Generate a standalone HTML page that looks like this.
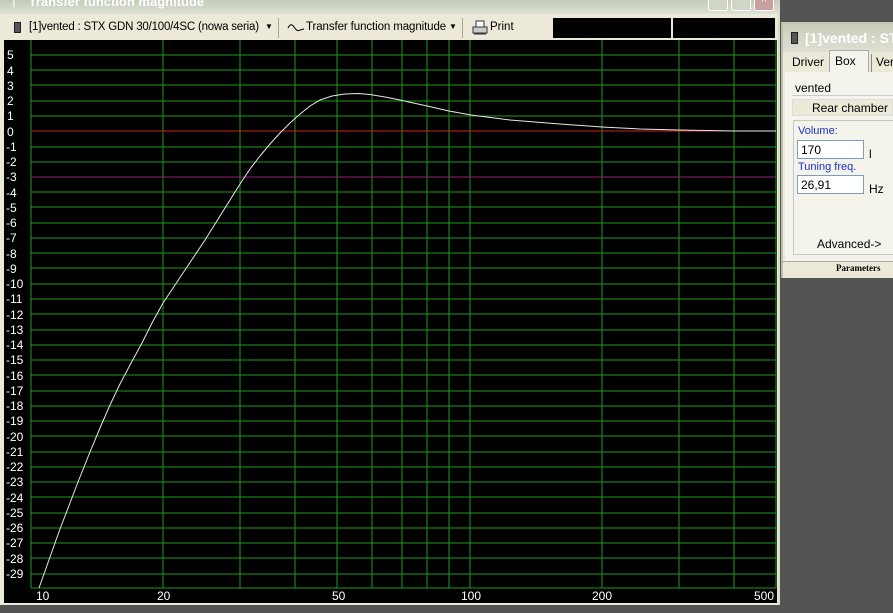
<!DOCTYPE html>
<html><head><meta charset="utf-8"><style>
*{margin:0;padding:0;box-sizing:border-box}
body{width:893px;height:613px;overflow:hidden;background:#545454;font-family:"Liberation Sans",sans-serif;position:relative}
.abs{position:absolute;white-space:nowrap}
</style></head><body>
<div class="abs" style="left:0;top:0;width:780px;height:605px;background:#ece9d8;border-right:2px solid #d8dcc8"></div>
<div class="abs" style="left:0;top:0;width:780px;height:14px;background:linear-gradient(#c4c9b8,#dfe2d6);overflow:hidden">
 <div class="abs" style="left:10px;top:-6px;color:#fff;font-size:13px;font-weight:bold;">ᛘ&nbsp;&nbsp; Transfer function magnitude</div>
</div>
<div class="abs" style="left:708px;top:-4px;width:20px;height:15px;background:#d0d6c6;border:1px solid #fff;border-radius:3px"></div>
<div class="abs" style="left:731px;top:-4px;width:20px;height:15px;background:#d0d6c6;border:1px solid #fff;border-radius:3px"></div>
<div class="abs" style="left:754px;top:-4px;width:20px;height:15px;background:#c8a0a0;border:1px solid #fff;border-radius:3px;color:#fff;font-size:10px;text-align:center">^</div>
<div class="abs" style="left:0;top:16px;width:780px;height:24px;font-size:11.5px;color:#000">
 <div class="abs" style="left:14px;top:6px;width:7px;height:11px;background:#555;border:1px solid #222"></div>
 <div class="abs" style="left:29px;top:5px;letter-spacing:-0.2px">[1]vented : STX GDN 30/100/4SC (nowa seria)</div>
 <div class="abs" style="left:265px;top:6px;font-size:8px">▼</div>
 <div class="abs" style="left:278px;top:2px;width:1px;height:20px;background:#aca899"></div>
 <svg class="abs" style="left:287px;top:6px" width="18" height="12"><path d="M1 6 Q4 0 7 5 T13 8 L17 7" fill="none" stroke="#000" stroke-width="1"/></svg>
 <div class="abs" style="left:306px;top:5px;letter-spacing:-0.1px">Transfer function magnitude</div>
 <div class="abs" style="left:449px;top:6px;font-size:8px">▼</div>
 <div class="abs" style="left:462px;top:2px;width:1px;height:20px;background:#aca899"></div>
 <svg class="abs" style="left:472px;top:4px" width="16" height="16"><rect x="4" y="1" width="8" height="6" fill="#fff" stroke="#333"/><rect x="1" y="7" width="14" height="6" fill="#ccc" stroke="#333"/><line x1="2" y1="14" x2="14" y2="14" stroke="#333"/></svg>
 <div class="abs" style="left:490px;top:5px">Print</div>
 <div class="abs" style="left:553px;top:2px;width:118px;height:20px;background:#000"></div>
 <div class="abs" style="left:673px;top:2px;width:102px;height:20px;background:#000"></div>
</div>
<svg class="abs" style="left:0;top:0" width="780" height="605" xmlns="http://www.w3.org/2000/svg">
<rect x="4" y="40" width="773" height="563" fill="#000"/>
<g stroke="#1e9a1e" stroke-width="1" shape-rendering="crispEdges">
<line x1="31" y1="40" x2="31" y2="588"/>
<line x1="31" y1="588" x2="776" y2="588"/>
<line x1="163" y1="40" x2="163" y2="588"/><line x1="240" y1="40" x2="240" y2="588"/>
<line x1="295" y1="40" x2="295" y2="588"/><line x1="337" y1="40" x2="337" y2="588"/>
<line x1="372" y1="40" x2="372" y2="588"/><line x1="402" y1="40" x2="402" y2="588"/>
<line x1="427" y1="40" x2="427" y2="588"/><line x1="449" y1="40" x2="449" y2="588"/>
<line x1="470" y1="40" x2="470" y2="588"/><line x1="602" y1="40" x2="602" y2="588"/>
<line x1="679" y1="40" x2="679" y2="588"/><line x1="734" y1="40" x2="734" y2="588"/>
<line x1="776" y1="40" x2="776" y2="588"/>
<line x1="31" y1="55" x2="776" y2="55"/><line x1="31" y1="70" x2="776" y2="70"/>
<line x1="31" y1="85" x2="776" y2="85"/><line x1="31" y1="101" x2="776" y2="101"/>
<line x1="31" y1="116" x2="776" y2="116"/><line x1="31" y1="147" x2="776" y2="147"/>
<line x1="31" y1="162" x2="776" y2="162"/>
<line x1="31" y1="192" x2="776" y2="192"/><line x1="31" y1="207" x2="776" y2="207"/>
<line x1="31" y1="223" x2="776" y2="223"/><line x1="31" y1="238" x2="776" y2="238"/>
<line x1="31" y1="253" x2="776" y2="253"/><line x1="31" y1="268" x2="776" y2="268"/>
<line x1="31" y1="284" x2="776" y2="284"/><line x1="31" y1="299" x2="776" y2="299"/>
<line x1="31" y1="314" x2="776" y2="314"/><line x1="31" y1="330" x2="776" y2="330"/>
<line x1="31" y1="345" x2="776" y2="345"/><line x1="31" y1="360" x2="776" y2="360"/>
<line x1="31" y1="375" x2="776" y2="375"/><line x1="31" y1="391" x2="776" y2="391"/>
<line x1="31" y1="406" x2="776" y2="406"/><line x1="31" y1="421" x2="776" y2="421"/>
<line x1="31" y1="436" x2="776" y2="436"/><line x1="31" y1="452" x2="776" y2="452"/>
<line x1="31" y1="467" x2="776" y2="467"/><line x1="31" y1="482" x2="776" y2="482"/>
<line x1="31" y1="497" x2="776" y2="497"/><line x1="31" y1="513" x2="776" y2="513"/>
<line x1="31" y1="528" x2="776" y2="528"/><line x1="31" y1="543" x2="776" y2="543"/>
<line x1="31" y1="558" x2="776" y2="558"/><line x1="31" y1="574" x2="776" y2="574"/>
</g>
<line x1="31" y1="131" x2="730" y2="131" stroke="#d02020" stroke-width="1" shape-rendering="crispEdges"/>
<line x1="31" y1="177" x2="776" y2="177" stroke="#902070" stroke-width="1" shape-rendering="crispEdges"/>
<polyline fill="none" stroke="#e8e8e8" stroke-width="1" points="39,588 50,557 60,529 70,503 78,482 90,452 100,428 110,405 120,384 130,365 142,343 152,323 163,303 175,285 185,270 195,255 205,240 215,224 225,208 235,192 242,181 250,169 260,156 270,144 280,133 290,123 300,114 310,106 320,100 332,96 345,94 358,93.5 370,94.5 385,97 400,100 427,106 449,111 471,115 510,120 560,124 602,127 640,129 679,130 734,131 776,131"/>
<g fill="#fff" font-size="12" font-family="Liberation Sans,sans-serif">
<text x="7" y="59">5</text><text x="7" y="75">4</text><text x="7" y="90">3</text><text x="7" y="105">2</text><text x="7" y="120">1</text><text x="7" y="136">0</text>
<text x="6" y="151">-1</text><text x="6" y="166">-2</text><text x="6" y="181">-3</text><text x="6" y="197">-4</text><text x="6" y="212">-5</text><text x="6" y="227">-6</text><text x="6" y="242">-7</text><text x="6" y="258">-8</text><text x="6" y="273">-9</text>
<text x="6" y="288">-10</text><text x="6" y="303">-11</text><text x="6" y="319">-12</text><text x="6" y="334">-13</text><text x="6" y="349">-14</text><text x="6" y="364">-15</text><text x="6" y="380">-16</text><text x="6" y="395">-17</text><text x="6" y="410">-18</text><text x="6" y="425">-19</text><text x="6" y="441">-20</text><text x="6" y="456">-21</text><text x="6" y="471">-22</text><text x="6" y="486">-23</text><text x="6" y="502">-24</text><text x="6" y="517">-25</text><text x="6" y="532">-26</text><text x="6" y="547">-27</text><text x="6" y="563">-28</text><text x="6" y="578">-29</text>
<text x="36" y="600">10</text><text x="157" y="600">20</text><text x="332" y="600">50</text><text x="461" y="600">100</text><text x="592" y="600">200</text><text x="754" y="600">500</text>
</g>
</svg>
<div class="abs" style="left:781px;top:22px;width:112px;height:256px;background:#ece9d8;border-left:2px solid #b8c0a8;border-top:2px solid #c0c8b0"></div>
<div class="abs" style="left:783px;top:24px;width:110px;height:28px;background:linear-gradient(#c8ceba,#dde0d2)"></div>
<div class="abs" style="left:791px;top:32px;width:7px;height:12px;background:#555;border:1px solid #222"></div>
<div class="abs" style="left:805px;top:30px;color:#fff;font-size:14px;font-weight:bold;">[1]vented : ST</div>
<div class="abs" style="left:792px;top:55px;font-size:12px">Driver</div>
<div class="abs" style="left:829px;top:50px;width:40px;height:22px;background:#f5f4ec;border:1px solid #aaa;border-bottom:none"></div>
<div class="abs" style="left:835px;top:54px;font-size:12px">Box</div>
<div class="abs" style="left:871px;top:54px;width:1px;height:18px;background:#888"></div>
<div class="abs" style="left:876px;top:55px;font-size:12px">Ver</div>
<div class="abs" style="left:785px;top:72px;width:108px;height:190px;background:#f5f4ec"></div>
<div class="abs" style="left:792px;top:79px;width:101px;height:17px;background:#f5f4ec;border-bottom:1px solid #ccc"></div>
<div class="abs" style="left:795px;top:81px;font-size:12px">vented</div>
<div class="abs" style="left:792px;top:99px;width:101px;height:17px;background:#ece9d8;border:1px solid #ddd"></div>
<div class="abs" style="left:812px;top:101px;font-size:12px">Rear chamber</div>
<div class="abs" style="left:793px;top:120px;width:100px;height:135px;border:1px solid #c8c8c0;border-right:none"></div>
<div class="abs" style="left:798px;top:125px;font-size:11px;color:#1c30c0">Volume:</div>
<div class="abs" style="left:797px;top:140px;width:67px;height:19px;background:#fff;border:1px solid #7f9db9"></div>
<div class="abs" style="left:801px;top:143px;font-size:12px">170</div>
<div class="abs" style="left:869px;top:147px;font-size:12px">l</div>
<div class="abs" style="left:798px;top:161px;font-size:11px;color:#1c30c0">Tuning freq.</div>
<div class="abs" style="left:797px;top:175px;width:67px;height:19px;background:#fff;border:1px solid #7f9db9"></div>
<div class="abs" style="left:801px;top:178px;font-size:12px">26,91</div>
<div class="abs" style="left:869px;top:182px;font-size:12px">Hz</div>
<div class="abs" style="left:817px;top:237px;font-size:12px">Advanced-&gt;</div>
<div class="abs" style="left:783px;top:261px;width:110px;height:15px;background:#ece9d8;border-top:1px solid #aaa"></div>
<div class="abs" style="left:836px;top:263px;font-size:9px;font-weight:bold;font-family:'Liberation Serif',serif">Parameters</div>
</body></html>
